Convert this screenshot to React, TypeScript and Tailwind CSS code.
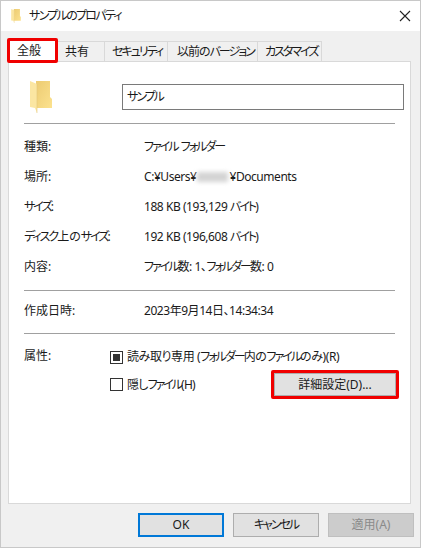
const F = '"Noto Sans","Noto Sans CJK JP",sans-serif';

function Folder({ className }: { className: string }) {
  return (
    <svg className={className} viewBox="0 0 22 32">
      <defs>
        <linearGradient id="fg" x1="0" y1="0" x2="1" y2="1">
          <stop offset="0" stopColor="#eccb72" />
          <stop offset="1" stopColor="#fce28f" />
        </linearGradient>
      </defs>
      <path d="M6 0h14v16l2 2v9H6z" fill="url(#fg)" />
      <path d="M0 0l7 3v29l-2-5-5-1z" fill="#fbe6a2" />
      <path d="M7 3v29" stroke="#e3c678" strokeWidth="0.6" />
    </svg>
  );
}

function K({ children }: { children: React.ReactNode }) {
  return <span className="tracking-[-2px]">{children}</span>;
}

function Row({ label, value }: { label: React.ReactNode; value: React.ReactNode }) {
  return (
    <div className="flex h-[30px] items-center whitespace-pre">
      <div className="w-[120px]">{label}</div>
      <div className="tracking-[-0.45px]">{value}</div>
    </div>
  );
}

function Btn({ children, className }: { children: React.ReactNode; className: string }) {
  return (
    <div className={`flex h-[24px] w-[86px] items-center justify-center ${className}`}>{children}</div>
  );
}

export default function App() {
  const tabs: [React.ReactNode, string][] = [
    ["共有", "w-[49px] pl-[9px]"],
    [<K key="a">セキュリティ</K>, "w-[63px] pl-[7px]"],
    [<span key="b" className="tracking-[-1px]">以前の<K>バージョン</K></span>, "w-[90px] pl-[9px]"],
    [<K key="c">カスタマイズ</K>, "w-[64px] pl-[7px]"],
  ];
  return (
    <div
      className="flex h-[548px] w-[421px] flex-col border border-[#c8c8c8] bg-[#f0f0f0] text-[12px] text-[#1a1a1a] [font-feature-settings:'palt']"
      style={{ fontFamily: F }}
    >
      <div className="flex h-[30px] shrink-0 items-center justify-between bg-white pl-[10px] pr-[9px]">
        <div className="flex items-center gap-[8px]">
          <Folder className="h-[14px] w-[10px]" />
          <span className="tracking-[-1.7px]">サンプルのプロパティ</span>
        </div>
        <svg className="h-[12px] w-[12px]" viewBox="0 0 12 12">
          <path d="M1 1l10 10M11 1L1 11" stroke="#222" strokeWidth="1.1" />
        </svg>
      </div>
      <div className="flex flex-1 flex-col pb-[10px] pl-[7px] pr-[6px] pt-[10px]">
        <div className="relative z-10 flex h-[20px] items-end whitespace-nowrap">
          <div className="relative flex h-[20px] w-[48px] items-center bg-white pl-[9px]">
            全般
            <div className="absolute -left-[1px] -top-[3px] h-[25px] w-[51px] rounded-[2px] border-[3px] border-[#f00000]" />
          </div>
          {tabs.map(([t, w], i) => (
            <div key={i} className={`flex h-[20px] items-center border-r border-t border-[#d9d9d9] bg-[#f0f0f0] ${w}`}>
              {t}
            </div>
          ))}
        </div>
        <div className="mr-[3px] flex flex-1 flex-col border border-[#d9d9d9] bg-white px-[15px]">
          <div className="flex h-[61px] shrink-0 items-start pt-[19px]">
            <Folder className="ml-[6px] h-[32px] w-[22px] shrink-0" />
            <div className="ml-[70px] mt-[3px] flex h-[26px] w-[282px] shrink-0 items-center border border-[#7a7a7a] pb-[1px] pl-[4px]">
              <K>サンプル</K>
            </div>
          </div>
          <div className="h-px bg-[#a0a0a0]" />
          <div className="pt-[8px]">
            <Row label="種類:" value={<span><K>ファイル</K><span className="tracking-normal"> </span><K>フォルダー</K></span>} />
            <Row
              label="場所:"
              value={
                <span className="flex items-center">
                  C:¥Users¥
                  <span className="mx-[1px] inline-block h-[10px] w-[31px] bg-[#d4d4d4] blur-[2px]" />
                  ¥Documents
                </span>
              }
            />
            <Row label={<K>サイズ:</K>} value={<span>188 KB (193,129 <K>バイト</K>)</span>} />
            <Row label={<span><K>ディスク</K>上の<K>サイズ</K>:</span>} value={<span>192 KB (196,608 <K>バイト</K>)</span>} />
            <Row label="内容:" value={<span><K>ファイル</K>数: 1、<K>フォルダー</K>数: 0</span>} />
          </div>
          <div className="mt-[8px] h-px bg-[#a0a0a0]" />
          <div className="py-[5px]">
            <Row label="作成日時:" value="2023年9月14日、14:34:34" />
          </div>
          <div className="mt-[2px] h-px bg-[#a0a0a0]" />
          <div className="flex whitespace-pre pt-[13px]">
            <div className="w-[86px] leading-[18px]">属性:</div>
            <div className="-mr-[1px] flex-1">
              <div className="flex h-[20px] items-center gap-[4px]">
                <div className="flex h-[13px] w-[13px] items-center justify-center border border-[#333]">
                  <div className="h-[7px] w-[7px] bg-[#333]" />
                </div>
                <span className="tracking-[-0.4px]">読み取り専用 (<K>フォルダー</K>内の<K>ファイル</K>のみ)(R)</span>
              </div>
              <div className="mt-[6px] flex items-center">
                <div className="flex items-center gap-[4px]">
                  <div className="h-[13px] w-[13px] border border-[#333]" />
                  <span className="tracking-[-0.8px]">隠し<K>ファイル</K>(H)</span>
                </div>
                <div className="relative ml-auto flex h-[23px] w-[122px] items-center justify-center border border-[#adadad] bg-[#e1e1e1]">
                  詳細設定(D)...
                  <div className="absolute -inset-[4px] rounded-[2px] border-[3px] border-[#f00000]" />
                </div>
              </div>
            </div>
          </div>
        </div>
        <div className="flex justify-end gap-[9px] pt-[9px]">
          <Btn className="border-2 border-[#0078d7] bg-[#e1e1e1]">OK</Btn>
          <Btn className="border border-[#adadad] bg-[#e1e1e1]"><K>キャンセル</K></Btn>
          <Btn className="border border-[#bfbfbf] bg-[#cccccc] text-[#8a8a8a]">適用(A)</Btn>
        </div>
      </div>
    </div>
  );
}
